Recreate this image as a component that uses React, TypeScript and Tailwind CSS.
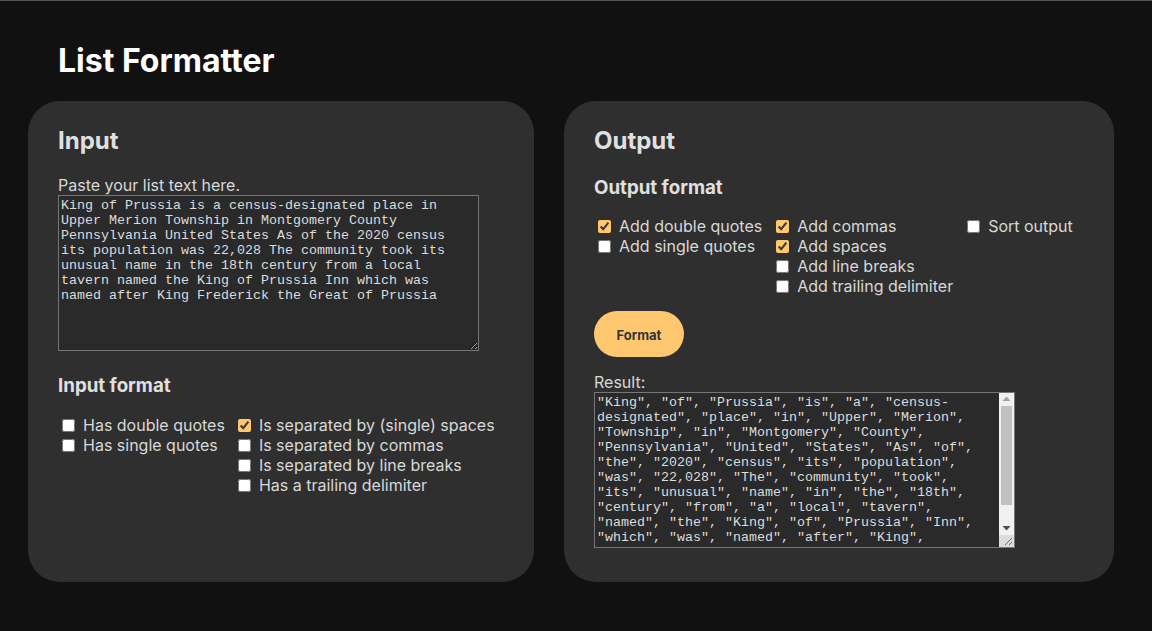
import React from "react";

const inputText =
  "King of Prussia is a census-designated place in Upper Merion Township in Montgomery County Pennsylvania United States As of the 2020 census its population was 22,028 The community took its unusual name in the 18th century from a local tavern named the King of Prussia Inn which was named after King Frederick the Great of Prussia";

const resultText = inputText
  .split(" ")
  .map((w) => `"${w}"`)
  .join(", ");

function Check({ label, checked }: { label: string; checked?: boolean }) {
  return (
    <label className="flex items-center h-5 leading-5 whitespace-nowrap">
      <input
        type="checkbox"
        defaultChecked={checked}
        className="w-[13px] h-[13px] ml-1 mr-2 accent-[#ffc870]"
      />
      <span>{label}</span>
    </label>
  );
}

const taClass =
  "block w-[421px] h-[156px] bg-[#2a2a2a] border border-[#767676] pl-[2px] py-[2px] text-[13.333px] leading-[15px] text-[#dcdcdc] [font-family:'Courier_New',Courier,'Nimbus_Mono_PS','Nimbus_Mono_L',FreeMono,'Liberation_Mono',monospace] outline-none";

export default function App() {
  return (
    <div className="min-h-[631px] bg-[#111111] border-t border-[#555555] text-[#d8d8d8] [font-family:Inter,sans-serif] text-[16px]">
      <h1 className="mt-[40px] ml-[58px] text-[32px] leading-[40px] font-bold text-white">
        List Formatter
      </h1>
      <div className="flex gap-[30px] ml-[28px] mt-[20px]">
        <div className="w-[506px] h-[481px] bg-[#2f2f2f] rounded-[32px] px-[30px] pt-[25px]">
          <h2 className="text-[24px] leading-[30px] font-bold text-[#e0e0e0]">
            Input
          </h2>
          <div className="mt-[19px] leading-5">Paste your list text here.</div>
          <textarea
            className={taClass + " pr-[2px]"}
            defaultValue={inputText}
            spellCheck={false}
          />
          <h3 className="mt-[23px] text-[18.72px] leading-[24px] font-bold text-[#e0e0e0]">
            Input format
          </h3>
          <div className="flex gap-[9px] mt-[17px]">
            <div className="flex flex-col">
              <Check label="Has double quotes" />
              <Check label="Has single quotes" />
            </div>
            <div className="flex flex-col">
              <Check label="Is separated by (single) spaces" checked />
              <Check label="Is separated by commas" />
              <Check label="Is separated by line breaks" />
              <Check label="Has a trailing delimiter" />
            </div>
          </div>
        </div>
        <div className="w-[550px] h-[481px] bg-[#2f2f2f] rounded-[32px] px-[30px] pt-[25px]">
          <h2 className="text-[24px] leading-[30px] font-bold text-[#e0e0e0]">
            Output
          </h2>
          <h3 className="mt-[20px] text-[18.72px] leading-[24px] font-bold text-[#e0e0e0]">
            Output format
          </h3>
          <div className="flex gap-[10px] mt-[16px]">
            <div className="flex flex-col">
              <Check label="Add double quotes" checked />
              <Check label="Add single quotes" />
            </div>
            <div className="flex flex-col">
              <Check label="Add commas" checked />
              <Check label="Add spaces" checked />
              <Check label="Add line breaks" />
              <Check label="Add trailing delimiter" />
            </div>
            <div className="flex flex-col">
              <Check label="Sort output" />
            </div>
          </div>
          <button className="mt-[15px] w-[90px] h-[46px] pt-[3px] rounded-full bg-[#ffc870] text-[#333333] text-[13px] font-bold">
            Format
          </button>
          <div className="mt-[15px] leading-5">Result:</div>
          <div className="relative w-[421px] h-[156px]">
            <textarea
              className={taClass + " pr-[17px] overflow-hidden resize-none"}
              defaultValue={resultText}
              spellCheck={false}
            />
            <div className="absolute right-[1px] top-[1px] bottom-[1px] w-[15px] flex flex-col bg-[#f1f1f1]">
              <div className="h-[15px] flex items-center justify-center">
                <svg width="9" height="6" viewBox="0 0 9 6">
                  <path d="M4.5 0.5 L8.5 5 L0.5 5 Z" fill="#a3a3a3" />
                </svg>
              </div>
              <div className="flex-1 px-[2px] pt-[1px] pb-[17px]">
                <div className="h-[99px] bg-[#c1c1c1]" />
              </div>
              <div className="h-[15px] flex items-center justify-center">
                <svg width="9" height="6" viewBox="0 0 9 6">
                  <path d="M0.5 1 L8.5 1 L4.5 5.5 Z" fill="#505050" />
                </svg>
              </div>
              <div className="h-[15px] bg-[#dcdcdc] relative">
                <svg className="absolute right-[1px] bottom-[1px]" width="10" height="10" viewBox="0 0 10 10">
                  <path d="M9 2 L2 9 M9 6 L6 9" stroke="#6b6b6b" strokeWidth="1" />
                </svg>
              </div>
            </div>
          </div>
        </div>
      </div>
    </div>
  );
}
